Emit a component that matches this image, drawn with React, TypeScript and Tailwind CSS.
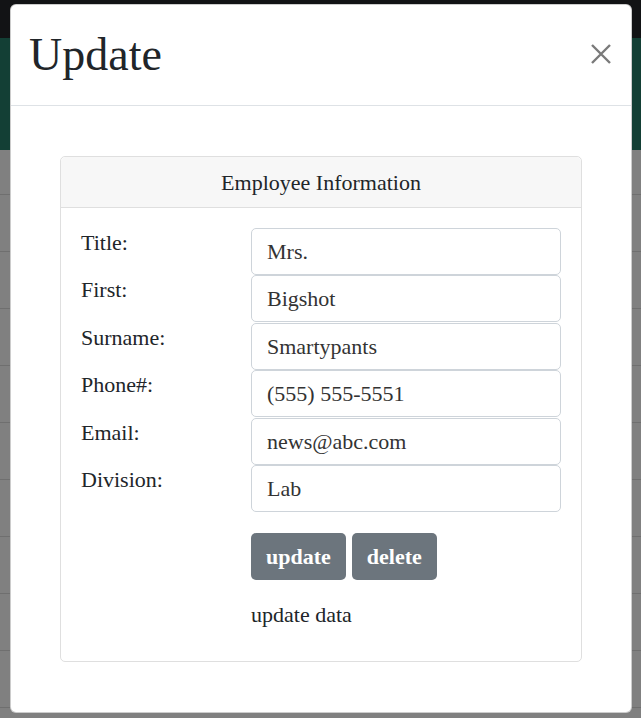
import React from "react";

const serif = { fontFamily: '"Liberation Serif", "Times New Roman", serif' };

const fields: [string, string][] = [
  ["Title:", "Mrs."],
  ["First:", "Bigshot"],
  ["Surname:", "Smartypants"],
  ["Phone#:", "(555) 555-5551"],
  ["Email:", "news@abc.com"],
  ["Division:", "Lab"],
];

export default function App() {
  return (
    <div className="relative w-[641px] h-[718px] overflow-hidden bg-[#808080]" style={serif}>
      {/* dimmed background page */}
      <div className="flex flex-col">
        <div className="h-[38px] bg-[#121315]" />
        <div className="h-[112px] bg-[#133f35]" />
        <div className="h-[45px] border-b border-[#6f6f6f]" />
        {Array.from({ length: 9 }).map((_, i) => (
          <div key={i} className="h-[57px] border-b border-[#6f6f6f]" />
        ))}
      </div>

      {/* modal */}
      <div className="absolute left-[10px] top-[4px] w-[622px] bg-white rounded-[6px] border border-black/20 flex flex-col">
        <div className="h-[101px] flex items-center justify-between pl-[18px] pr-[19px] border-b border-[#dee2e6]">
          <h5 className="text-[46px] leading-[60px] text-[#212529] font-normal">Update</h5>
          <svg width="22" height="22" viewBox="0 0 22 22" className="mt-[-2px]">
            <path d="M2 2 L20 20 M20 2 L2 20" stroke="#7a7a7a" strokeWidth="2.4" />
          </svg>
        </div>
        <div className="px-[49px] pt-[50px] pb-[50px]">
          <div className="border border-[#dfdfdf] rounded-[5px]">
            <div className="h-[51px] bg-[#f7f7f7] border-b border-[#dfdfdf] flex items-center justify-center rounded-t-[5px] text-[22px] text-[#212529]">
              Employee Information
            </div>
            <div className="px-[20px] pt-[20px] pb-[31px]">
              <div className="flex flex-col">
                {fields.map(([label, value]) => (
                  <div key={label} className="flex h-[47.4px]">
                    <div className="w-[170px] text-[22px] leading-[30px] text-[#212529]">{label}</div>
                    <div className="flex-1 h-[47px] border border-[#ced4da] rounded-[5px] px-[15px] flex items-center text-[22px] text-[#333]">
                      {value}
                    </div>
                  </div>
                ))}
              </div>
              <div className="ml-[170px] mt-[21px] flex gap-[6px]">
                <button className="h-[47px] px-[15px] bg-[#6c757d] rounded-[5px] text-white font-bold text-[22px]">update</button>
                <button className="h-[47px] px-[15px] bg-[#6c757d] rounded-[5px] text-white font-bold text-[22px]">delete</button>
              </div>
              <div className="ml-[170px] mt-[20px] text-[22px] leading-[30px] text-[#212529]">update data</div>
            </div>
          </div>
        </div>
      </div>
    </div>
  );
}
